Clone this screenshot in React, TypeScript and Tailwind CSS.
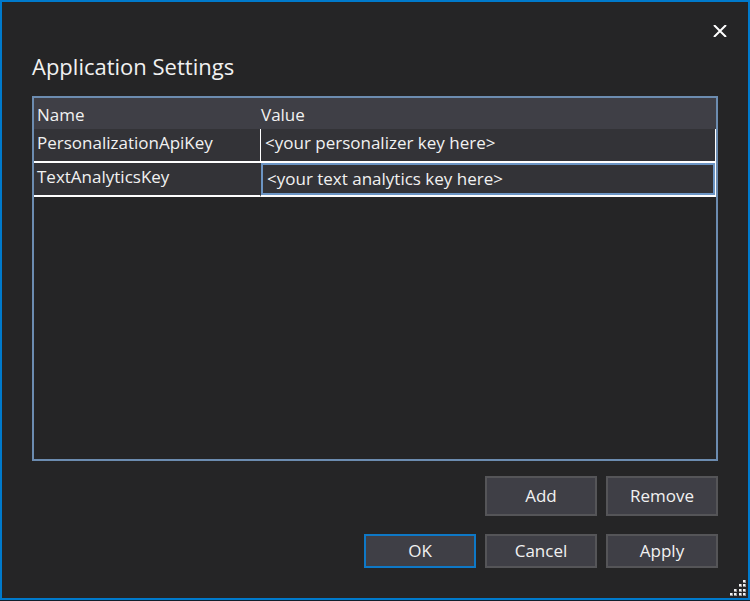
import { useState } from "react";

type Setting = { name: string; value: string };

const initialSettings: Setting[] = [
  { name: "PersonalizationApiKey", value: "<your personalizer key here>" },
  { name: "TextAnalyticsKey", value: "<your text analytics key here>" },
];

const gripDots = [
  [13, 0],
  [9, 4], [13, 4],
  [4, 9], [9, 9], [13, 9],
  [0, 13], [4, 13], [9, 13], [13, 13],
];

function DialogButton({ label, tall = false, primary = false }: { label: string; tall?: boolean; primary?: boolean }) {
  return (
    <button
      type="button"
      className={`w-28 border-2 bg-[#3f3f46] text-[17px] leading-6 ${tall ? "h-10" : "h-[34px]"} ${
        primary ? "border-[#0e78c6]" : "border-[#555558]"
      }`}
    >
      {label}
    </button>
  );
}

export default function App() {
  const [settings, setSettings] = useState(initialSettings);
  const selected = 1;

  const update = (index: number, value: string) =>
    setSettings(settings.map((s, i) => (i === index ? { ...s, value } : s)));

  return (
    <div className="flex min-h-screen flex-col bg-[#10202e] pb-px font-['Open_Sans','Noto_Sans',sans-serif] text-[#f1f1f1]">
      <main className="relative flex flex-1 flex-col border-2 border-[#007acc] bg-[#252526] px-[30px] pb-[30px]">
        <header className="pt-[17px]">
          <div className="-mr-[14px] flex justify-end">
            <button type="button" aria-label="Close" className="flex size-6 items-center justify-center">
              <svg width="14" height="12" viewBox="0 0 14 12" fill="none" stroke="#fff" strokeWidth="2">
                <path d="M1 0 L13 12 M13 0 L1 12" />
              </svg>
            </button>
          </div>
          <h1 className="mt-[7px] text-[22px] leading-8">Application Settings</h1>
        </header>

        <section className="mt-[14px] flex-1 border-2 border-[#6c8cb0]">
          <table className="w-full table-fixed border-separate border-spacing-0 text-[17px] leading-6">
            <colgroup>
              <col className="w-[226px]" />
              <col />
            </colgroup>
            <thead>
              <tr className="h-[31px] bg-[#3f3f46] text-left">
                <th className="px-[3px] pt-[2px] pb-0 font-normal">Name</th>
                <th className="px-[1px] pt-[2px] pb-0 font-normal">Value</th>
              </tr>
            </thead>
            <tbody>
              {settings.map((s, i) => (
                <tr key={s.name} className="h-[34px] bg-[#333337]">
                  <td className="border-b-2 border-white px-[3px] pt-0 pb-1 align-top">
                    <label className="block pt-[2px]" htmlFor={s.name}>{s.name}</label>
                  </td>
                  <td
                    className={`border-x border-b-2 border-white p-0 align-top ${
                      i === selected ? "border-l-[#333337]" : ""
                    }`}
                  >
                    <input
                      id={s.name}
                      type="text"
                      value={s.value}
                      onChange={(e) => update(i, e.target.value)}
                      className={`block h-8 w-full bg-transparent outline-none ${
                        i === selected ? "border-2 border-[#6c95c4] px-1 pb-px" : "px-1 pb-[6px]"
                      }`}
                    />
                  </td>
                </tr>
              ))}
            </tbody>
          </table>
        </section>

        <div className="mt-[15px] flex justify-end gap-[9px]">
          <DialogButton label="Add" tall />
          <DialogButton label="Remove" tall />
        </div>
        <div className="mt-[18px] flex justify-end gap-[9px]">
          <DialogButton label="OK" primary />
          <DialogButton label="Cancel" />
          <DialogButton label="Apply" />
        </div>

        <svg className="absolute right-px bottom-px cursor-nwse-resize" width="17" height="17" viewBox="0 0 17 17" aria-hidden="true">
          {gripDots.map(([x, y]) => (
            <g key={`${x}-${y}`}>
              <rect x={x} y={y} width="3" height="3" fill="#9a9a9a" />
              <rect x={x} y={y} width="2" height="2" fill="#f4f4f4" />
            </g>
          ))}
        </svg>
      </main>
    </div>
  );
}
